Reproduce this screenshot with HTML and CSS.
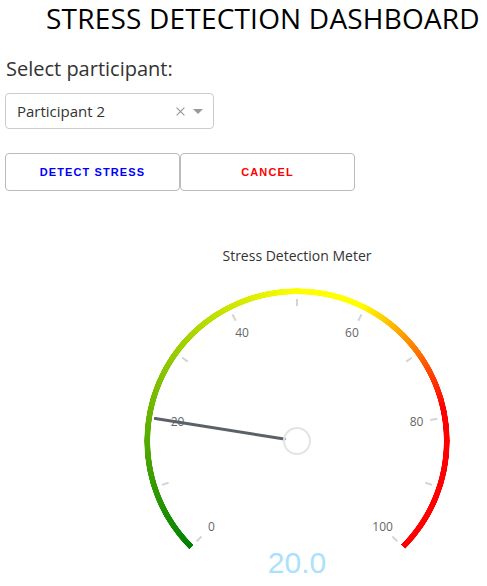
FILE: index.html
```html
<!DOCTYPE html>
<html>
<head>
<meta charset="utf-8">
<link rel="stylesheet" href="styles.css">
</head>
<body>
<div class="page">
  <h1 class="title">STRESS DETECTION DASHBOARD</h1>
  <div class="label">Select participant:</div>
  <div class="select">
    <span class="select-value">Participant 2</span>
    <svg class="clear" width="9" height="9" viewBox="0 0 9 9"><path d="M0.6 0.6 L8.4 8.4 M8.4 0.6 L0.6 8.4" stroke="#999" stroke-width="1.2" fill="none"/></svg>
    <svg class="caret" width="10" height="5" viewBox="0 0 10 5"><path d="M0 0 L10 0 L5 5 Z" fill="#999"/></svg>
  </div>
  <div class="buttons">
    <button class="btn btn-detect">DETECT STRESS</button>
    <button class="btn btn-cancel">CANCEL</button>
  </div>
  <div class="gauge">
    <div class="gauge-title">Stress Detection Meter</div>
    <div class="dial">
      <div class="ring"></div>
      <svg class="dial-svg" width="340" height="310" viewBox="0 0 340 310">
        <g stroke="#d4d4d4" stroke-width="2" stroke-linecap="butt">
          <line x1="74.54" y1="266.46" x2="69.59" y2="271.41"/>
          <line x1="41.60" y1="212.72" x2="34.95" y2="214.88"/>
          <line x1="36.66" y1="149.89" x2="29.75" y2="148.79"/>
          <line x1="60.78" y1="91.65" x2="55.12" y2="87.53"/>
          <line x1="108.71" y1="50.72" x2="105.53" y2="44.48"/>
          <line x1="170" y1="36" x2="170" y2="29"/>
          <line x1="231.29" y1="50.72" x2="234.47" y2="44.48"/>
          <line x1="279.22" y1="91.65" x2="284.88" y2="87.53"/>
          <line x1="303.34" y1="149.89" x2="310.25" y2="148.79"/>
          <line x1="298.40" y1="212.72" x2="305.05" y2="214.88"/>
          <line x1="265.46" y1="266.46" x2="270.41" y2="271.41"/>
        </g>
        <g class="tick-labels" text-anchor="middle">
          <text x="84.4" y="261">0</text>
          <text x="50.5" y="156.3">20</text>
          <text x="115.1" y="67.4">40</text>
          <text x="224.9" y="67.4">60</text>
          <text x="289.5" y="156.3">80</text>
          <text x="255.6" y="261">100</text>
        </g>
        <line x1="157.2" y1="168.9" x2="28.3" y2="148.6" stroke="#5a6169" stroke-width="3" stroke-linecap="round"/>
        <circle cx="170" cy="171" r="13" fill="none" stroke="#e4e4e4" stroke-width="2"/>
        <text class="value" x="170" y="303" text-anchor="middle">20.0</text>
      </svg>
    </div>
  </div>
</div>
</body>
</html>
```
FILE: styles.css
```css
html, body {
  margin: 0;
  padding: 0;
  background: #fff;
  overflow: hidden;
}
.page {
  padding: 0 5px;
  font-family: "Open Sans", "DejaVu Sans", sans-serif;
  color: #333;
}
.title {
  margin: 0 0 0 41px;
  font-size: 28px;
  font-weight: 400;
  letter-spacing: 0.2px;
  line-height: 37px;
  color: #000;
  white-space: nowrap;
}
.label {
  margin-top: 18px;
  padding-left: 1px;
  font-size: 20px;
  line-height: 27px;
  color: #333;
}
.select {
  margin-top: 11px;
  box-sizing: border-box;
  width: 209px;
  height: 36px;
  border: 1px solid #ccc;
  border-radius: 4px;
  display: flex;
  align-items: center;
  padding: 0 10px 0 11px;
  font-size: 15px;
  line-height: 34px;
  color: #333;
}
.select-value {
  flex: 1;
}
.clear {
  margin-right: 8px;
}
.buttons {
  margin-top: 24px;
  display: flex;
}
.btn {
  box-sizing: border-box;
  width: 175px;
  height: 38px;
  margin: 0;
  padding: 0;
  background: #fff;
  border: 1px solid #bbb;
  border-radius: 4px;
  font-family: "Liberation Sans", Arial, sans-serif;
  font-size: 11px;
  font-weight: 700;
  letter-spacing: 1.1px;
  line-height: 36px;
  text-align: center;
}
.btn-detect {
  color: #0000ff;
}
.btn-cancel {
  color: #ff0000;
}
.gauge {
  margin: 55px 0 0 122px;
  width: 340px;
}
.gauge-title {
  text-align: center;
  font-size: 14px;
  line-height: 19px;
  color: #333;
}
.dial {
  position: relative;
  margin-top: 5px;
  width: 340px;
  height: 310px;
}
.ring {
  position: absolute;
  left: 17px;
  top: 18px;
  width: 306px;
  height: 306px;
  border-radius: 50%;
  background: conic-gradient(from 225deg, #008000 0deg, #ffff00 135deg, #ffff00 160deg, #ff0000 212deg, #ff0000 270deg, transparent 270deg);
  -webkit-mask: radial-gradient(circle closest-side, transparent 146.5px, #000 147px, #000 152.5px, transparent 153px);
  mask: radial-gradient(circle closest-side, transparent 146.5px, #000 147px, #000 152.5px, transparent 153px);
}
.dial-svg {
  position: absolute;
  left: 0;
  top: 0;
}
.tick-labels {
  font-family: "Open Sans", "DejaVu Sans", sans-serif;
  font-size: 12px;
  fill: #666;
}
.value {
  font-family: "Liberation Sans", Arial, sans-serif;
  font-size: 30px;
  fill: #abe1fa;
}
```
